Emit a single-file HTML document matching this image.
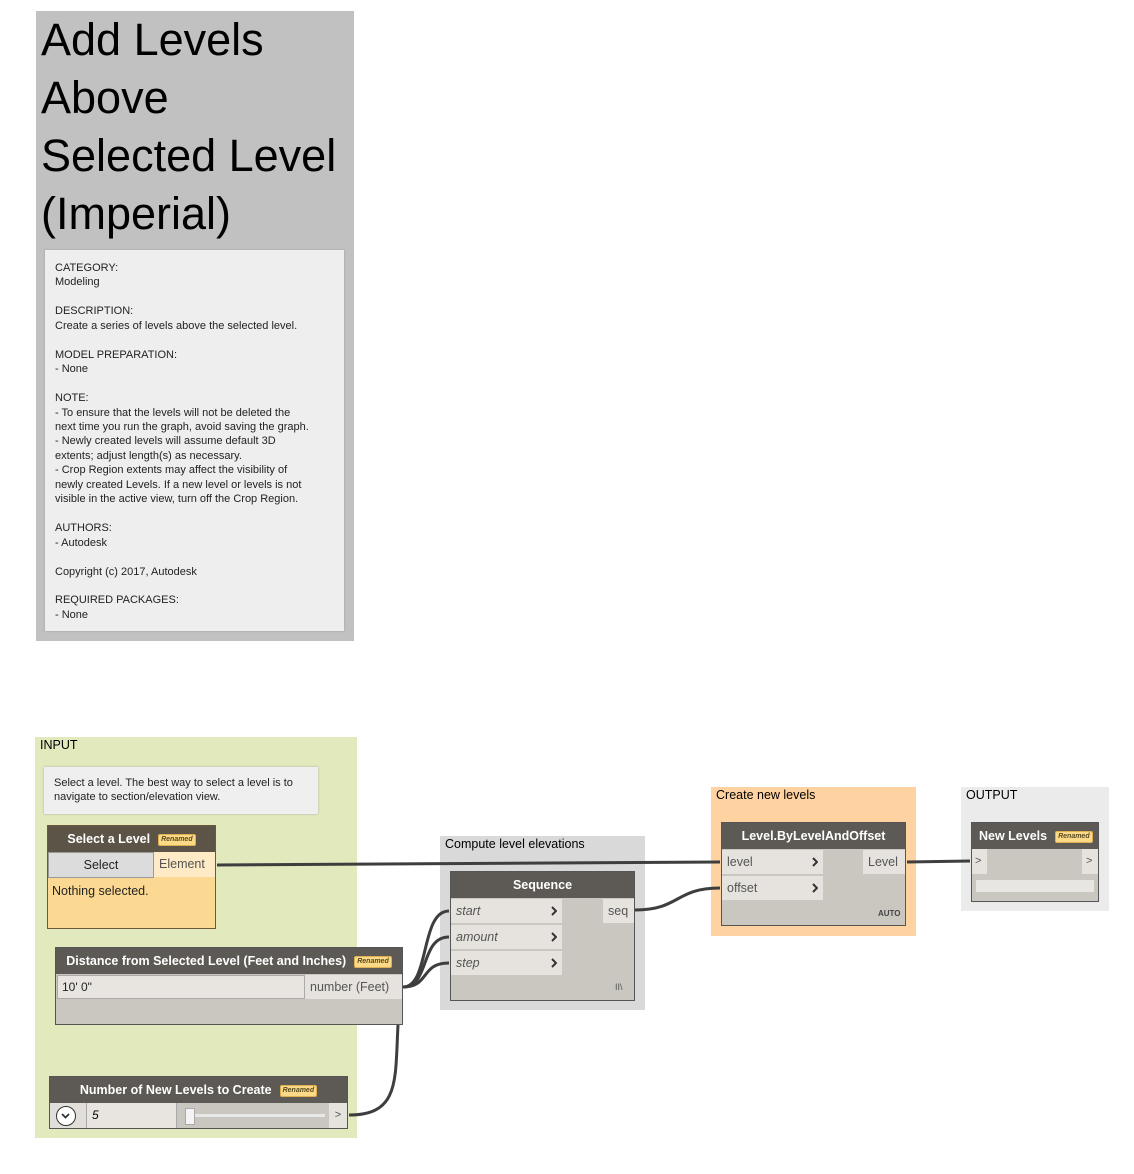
<!DOCTYPE html>
<html><head><meta charset="utf-8"><style>
*{margin:0;padding:0;box-sizing:border-box}
body{width:1134px;height:1174px;background:#fff;position:relative;font-family:"Liberation Sans",sans-serif;overflow:hidden}
.a{position:absolute}
.hdr{background:#5d5a55;color:#fff;font-size:12.5px;font-weight:bold;text-align:center;line-height:26px;white-space:nowrap}
.ren{display:inline-block;background:#fbd986;color:#5a4a20;font-size:7px;font-style:italic;font-weight:bold;border-radius:2px;padding:0 2px;line-height:10px;vertical-align:middle;margin-left:8px;border:1px solid #e0b050}
.port{background:#e6e3df;font-size:12.5px;color:#555;line-height:24px;padding-left:5px}
.chev{position:absolute;right:5px;top:7px;width:6px;height:10px}
</style></head><body>
<div class="a" style="left:36px;top:11px;width:318px;height:630px;background:#c1c1c1"></div>
<div class="a" style="left:41px;top:11px;font-size:45px;line-height:58px;color:#000;white-space:nowrap">Add Levels<br>Above<br>Selected Level<br>(Imperial)</div>
<div class="a" style="left:45px;top:250px;width:299px;height:381px;background:#eeeeee;box-shadow:0 0 2px #999;padding:11px 0 0 10px;font-size:11px;line-height:14.45px;color:#222;white-space:nowrap">CATEGORY:<br>Modeling<br><br>DESCRIPTION:<br>Create a series of levels above the selected level.<br><br>MODEL PREPARATION:<br>- None<br><br>NOTE:<br>- To ensure that the levels will not be deleted the<br>next time you run the graph, avoid saving the graph.<br>- Newly created levels will assume default 3D<br>extents; adjust length(s) as necessary.<br>- Crop Region extents may affect the visibility of<br>newly created Levels. If a new level or levels is not<br>visible in the active view, turn off the Crop Region.<br><br>AUTHORS:<br>- Autodesk<br><br>Copyright (c) 2017, Autodesk<br><br>REQUIRED PACKAGES:<br>- None</div>

<div class="a" style="left:35px;top:737px;width:322px;height:401px;background:#e2e9bc"></div>
<div class="a" style="left:40px;top:738px;font-size:12.5px">INPUT</div>
<div class="a" style="left:440px;top:836px;width:205px;height:174px;background:#d9d9d9"></div>
<div class="a" style="left:445px;top:837px;font-size:12.5px">Compute level elevations</div>
<div class="a" style="left:711px;top:787px;width:205px;height:149px;background:#fed3a1"></div>
<div class="a" style="left:716px;top:788px;font-size:12.5px">Create new levels</div>
<div class="a" style="left:961px;top:787px;width:148px;height:124px;background:#ebebeb"></div>
<div class="a" style="left:966px;top:788px;font-size:12.5px">OUTPUT</div>

<div class="a" style="left:44px;top:767px;width:274px;height:47px;background:#efefef;box-shadow:0 0 2px #aaa;padding:9px 0 0 10px;font-size:11px;line-height:14px;color:#222;white-space:nowrap">Select a level. The best way to select a level is to<br>navigate to section/elevation view.</div>

<div class="a" style="left:47px;top:825px;width:169px;height:104px;background:#fcd993;border:1px solid #6b5a3a">
 <div class="hdr" style="background:#5c5446">Select a Level<span class="ren">Renamed</span></div>
 <div class="a" style="left:0;top:26px;width:106px;height:26px;background:#dcdcdc;border:1px solid #999;text-align:center;font-size:12.5px;line-height:24px;color:#222">Select</div>
 <div class="a" style="left:106px;top:26px;width:61px;height:25px;background:#feeac4;font-size:12.5px;line-height:25px;color:#555;padding-left:5px">Element</div>
 <div class="a" style="left:4px;top:58px;font-size:12.5px;color:#222">Nothing selected.</div>
</div>

<div class="a" style="left:55px;top:947px;width:348px;height:78px;background:#cac6c0;border:1px solid #555">
 <div class="hdr">Distance from Selected Level (Feet and Inches)<span class="ren">Renamed</span></div>
 <div class="a" style="left:1px;top:27px;width:248px;height:24px;background:#e8e5e1;border:1px solid #aaa;font-size:12px;line-height:22px;padding-left:4px;color:#222">10' 0"</div>
 <div class="a" style="left:249px;top:27px;width:97px;height:24px;background:#e6e3df;font-size:12.5px;line-height:24px;padding-left:5px;color:#555">number (Feet)</div>
</div>

<div class="a" style="left:49px;top:1076px;width:299px;height:53px;background:#cac6c0;border:1px solid #555">
 <div class="hdr">Number of New Levels to Create<span class="ren">Renamed</span></div>
 <div class="a" style="left:0;top:26px;width:36px;height:25px;background:#e2dfdb"></div>
 <div class="a" style="left:6px;top:29px;width:20px;height:20px;border:1.5px solid #333;border-radius:50%;background:#fff"><svg width="17" height="17" style="position:absolute;left:0;top:0"><polyline points="5,7 8.5,10.5 12,7" fill="none" stroke="#333" stroke-width="1.8"/></svg></div>
 <div class="a" style="left:36px;top:26px;width:91px;height:25px;background:#e8e5e1;border-left:1px solid #aaa;border-right:1px solid #aaa;font-size:12px;line-height:25px;padding-left:5px;font-style:italic">5</div>
 <div class="a" style="left:140px;top:37px;width:135px;height:3px;background:#e8e8e8"></div>
 <div class="a" style="left:135px;top:31px;width:10px;height:17px;background:#f4f4f4;border:1px solid #aaa"></div>
 <div class="a" style="left:279px;top:26px;width:18px;height:25px;background:#e6e3df;font-size:11px;line-height:25px;text-align:center;color:#555">&gt;</div>
</div>

<div class="a" style="left:450px;top:871px;width:185px;height:130px;background:#cac6c0;border:1px solid #555">
 <div class="hdr">Sequence</div>
 <div class="a port" style="left:0;top:27px;width:111px;font-style:italic">start<svg class="chev"><polyline points="1,1 5,5 1,9" fill="none" stroke="#333" stroke-width="2"/></svg></div>
 <div class="a port" style="left:0;top:53px;width:111px;font-style:italic">amount<svg class="chev"><polyline points="1,1 5,5 1,9" fill="none" stroke="#333" stroke-width="2"/></svg></div>
 <div class="a port" style="left:0;top:79px;width:111px;font-style:italic">step<svg class="chev"><polyline points="1,1 5,5 1,9" fill="none" stroke="#333" stroke-width="2"/></svg></div>
 <div class="a port" style="left:152px;top:27px;width:31px">seq</div>
 <div class="a" style="left:164px;top:110px;font-size:9px;color:#555">II\</div>
</div>

<div class="a" style="left:721px;top:822px;width:185px;height:104px;background:#cac6c0;border:1px solid #555">
 <div class="hdr">Level.ByLevelAndOffset</div>
 <div class="a port" style="left:0;top:27px;width:101px">level<svg class="chev"><polyline points="1,1 5,5 1,9" fill="none" stroke="#333" stroke-width="2"/></svg></div>
 <div class="a port" style="left:0;top:53px;width:101px">offset<svg class="chev"><polyline points="1,1 5,5 1,9" fill="none" stroke="#333" stroke-width="2"/></svg></div>
 <div class="a port" style="left:141px;top:27px;width:42px">Level</div>
 <div class="a" style="left:156px;top:86px;font-size:8px;font-weight:bold;color:#444">AUTO</div>
</div>

<div class="a" style="left:971px;top:822px;width:128px;height:80px;background:#cac6c0;border:1px solid #555">
 <div class="hdr" style="text-align:left;padding-left:7px">New Levels<span class="ren">Renamed</span></div>
 <div class="a" style="left:0;top:26px;width:15px;height:25px;background:#e6e3df;font-size:11px;line-height:25px;padding-left:3px;color:#555">&gt;</div>
 <div class="a" style="left:110px;top:26px;width:16px;height:25px;background:#e6e3df;font-size:11px;line-height:25px;padding-left:4px;color:#555">&gt;</div>
 <div class="a" style="left:4px;top:57px;width:118px;height:12px;background:#e8e6e2"></div>
</div>

<svg class="a" style="left:0;top:0" width="1134" height="1174">
<g fill="none" stroke="#3e3e3e" stroke-width="3">
<path d="M217 865 L720 862"/>
<path d="M635 910 C680 910 675 888 720 888"/>
<path d="M907 862 L970 861"/>
<path d="M403 987 C430 987 420 911 449 911"/>
<path d="M403 987 C430 987 420 937 449 937"/>
<path d="M403 987 C430 987 420 963 449 963"/>
<path d="M349 1115 C400 1115 395 1080 398 1025"/>
</g>
</svg>
</body></html>
